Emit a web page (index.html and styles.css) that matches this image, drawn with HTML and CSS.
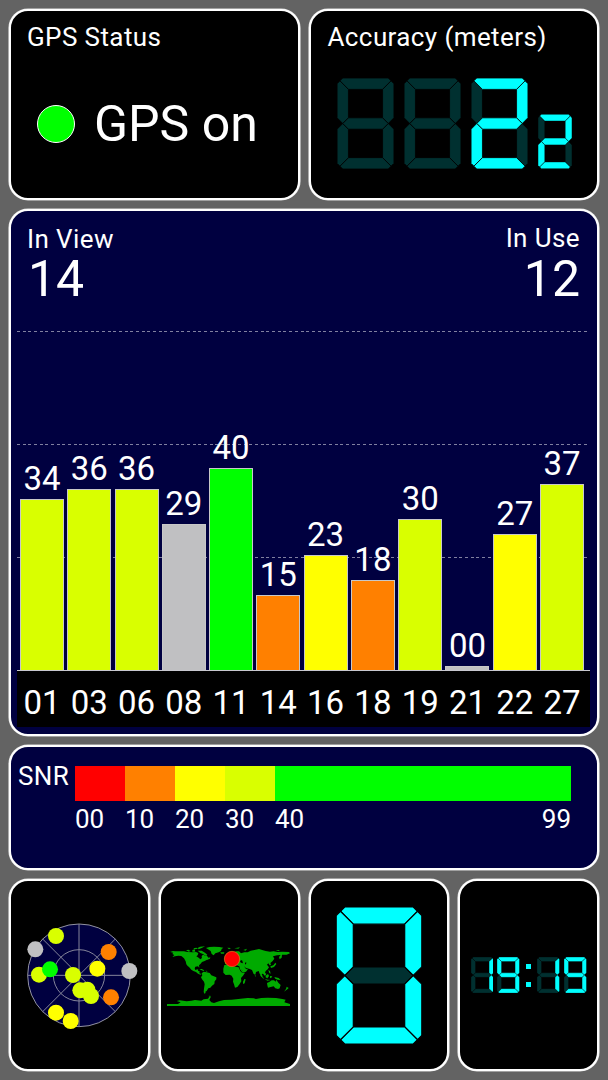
FILE: index.html
```html
<!DOCTYPE html>
<html lang="en">
<head>
<meta charset="utf-8">
<title>GPS Status</title>
<link rel="stylesheet" href="styles.css">
</head>
<body>
<svg class="defs" aria-hidden="true">
  <defs>
    <path id="a" d="M5 5L10 0H90L95 5L80 20H20Z"/>
    <path id="b" d="M95 5L100 10V70L90 80L80 70V20Z"/>
    <path id="c" d="M90 80L100 90V150L95 155L80 140V90Z"/>
    <path id="d" d="M5 155L10 160H90L95 155L80 140H20Z"/>
    <path id="e" d="M10 80L20 90V140L5 155L0 150V90Z"/>
    <path id="f" d="M5 5L20 20V70L10 80L0 70V10Z"/>
    <path id="g" d="M10 80L20 70H80L90 80L80 90H20Z"/>
    <symbol id="off" viewBox="0 0 100 160"><g class="dim"><use href="#a"/><use href="#b"/><use href="#c"/><use href="#d"/><use href="#e"/><use href="#f"/><use href="#g"/></g></symbol>
    <symbol id="n0" viewBox="0 0 100 160"><g class="dim"><use href="#g"/></g><g class="lit"><use href="#a"/><use href="#b"/><use href="#c"/><use href="#d"/><use href="#e"/><use href="#f"/></g></symbol>
    <symbol id="n1" viewBox="0 0 100 160"><g class="dim"><use href="#a"/><use href="#d"/><use href="#e"/><use href="#f"/><use href="#g"/></g><g class="lit"><use href="#b"/><use href="#c"/></g></symbol>
    <symbol id="n2" viewBox="0 0 100 160"><g class="dim"><use href="#c"/><use href="#f"/></g><g class="lit"><use href="#a"/><use href="#b"/><use href="#g"/><use href="#e"/><use href="#d"/></g></symbol>
    <symbol id="n9" viewBox="0 0 100 160"><g class="dim"><use href="#e"/></g><g class="lit"><use href="#a"/><use href="#b"/><use href="#c"/><use href="#d"/><use href="#f"/><use href="#g"/></g></symbol>
  </defs>
</svg>
<main class="dashboard">
  <section class="card status">
    <h2 class="label">GPS Status</h2>
    <div class="status-row"><span class="lamp"></span><span class="big">GPS on</span></div>
  </section>

  <section class="card accuracy">
    <h2 class="label">Accuracy (meters)</h2>
    <div class="digits">
      <svg class="digit"><use href="#off"/></svg>
      <svg class="digit"><use href="#off"/></svg>
      <svg class="digit"><use href="#n2"/></svg>
      <svg class="digit small"><use href="#n2"/></svg>
    </div>
  </section>

  <section class="card signal">
    <header class="counts">
      <div class="count"><h2 class="label">In View</h2><div class="big">14</div></div>
      <div class="count in-use"><h2 class="label">In Use</h2><div class="big">12</div></div>
    </header>
    <div class="plot">
      <div class="gridline g1"></div><div class="gridline g2"></div><div class="gridline g3"></div>
      <div class="column"><span>34</span><i class="bar lime" style="height:171px"></i></div>
      <div class="column"><span>36</span><i class="bar lime" style="height:181px"></i></div>
      <div class="column"><span>36</span><i class="bar lime" style="height:181px"></i></div>
      <div class="column"><span>29</span><i class="bar gray" style="height:146px"></i></div>
      <div class="column"><span>40</span><i class="bar green" style="height:202px"></i></div>
      <div class="column"><span>15</span><i class="bar orange" style="height:75px"></i></div>
      <div class="column"><span>23</span><i class="bar yellow" style="height:115px"></i></div>
      <div class="column"><span>18</span><i class="bar orange" style="height:90px"></i></div>
      <div class="column"><span>30</span><i class="bar lime" style="height:151px"></i></div>
      <div class="column"><span>00</span><i class="bar gray" style="height:4px"></i></div>
      <div class="column"><span>27</span><i class="bar yellow" style="height:136px"></i></div>
      <div class="column"><span>37</span><i class="bar lime" style="height:186px"></i></div>
    </div>
    <div class="axis">
      <span>01</span><span>03</span><span>06</span><span>08</span><span>11</span><span>14</span><span>16</span><span>18</span><span>19</span><span>21</span><span>22</span><span>27</span>
    </div>
  </section>

  <section class="card snr">
    <h2 class="label">SNR</h2>
    <div class="scale">
      <div class="step"><i class="swatch red"></i><span>00</span></div>
      <div class="step"><i class="swatch orange"></i><span>10</span></div>
      <div class="step"><i class="swatch yellow"></i><span>20</span></div>
      <div class="step"><i class="swatch lime"></i><span>30</span></div>
      <div class="step last"><i class="swatch green"></i><span>40</span><span>99</span></div>
    </div>
  </section>

  <section class="card tile">
    <svg class="radar" viewBox="0 0 465 615">
      <circle class="sky" cx="237" cy="301" r="154"/>
      <g class="rings"><circle cx="237" cy="301" r="77"/><path d="M83 301H391M237 147V455M128 192L346 410M346 192L128 410"/></g>
      <g fill="#d9ff00"><circle cx="168" cy="183" r="24"/><circle cx="117" cy="299" r="24"/><circle cx="219" cy="300" r="24"/><circle cx="241" cy="346" r="24"/><circle cx="262" cy="344" r="24"/><circle cx="273" cy="363" r="24"/></g>
      <g fill="#ff0"><circle cx="292" cy="281" r="24"/><circle cx="168" cy="413" r="24"/><circle cx="212" cy="438" r="24"/></g>
      <g fill="#ff8000"><circle cx="326" cy="231" r="24"/><circle cx="333" cy="367" r="24"/></g>
      <g fill="#c0c0c2"><circle cx="106" cy="223" r="24"/><circle cx="388" cy="288" r="24"/></g>
      <circle cx="150" cy="283" r="24" fill="#0f0"/>
    </svg>
  </section>

  <section class="card tile">
    <svg class="map" viewBox="0 0 390 204">
      <g class="land">
        <path d="M9 28L18 30L27 27L33 28L48 28L60 28L70 30L86 31L96 30L103 33L101 40L97 43L104 47L109 52L114 48L112 42L117 38L124 41L128 40L134 49L129 53L122 57L114 60L110 65L105 70L106 77L102 73L94 74L92 79L94 84L100 82L103 83L102 87L107 88L106 94L113 96L109 98L102 95L96 90L88 87L82 83L75 75L71 72L67 67L65 58L60 49L52 42L43 41L33 43L25 45L31 39L25 36L28 32Z"/>
        <path d="M66 25L73 23L80 27L74 29ZM85 24L92 22L94 29L85 29ZM88 19L97 17L102 20L92 22ZM101 18L108 14L123 13L113 18L104 22ZM101 26L113 26L123 32L130 38L124 41L117 36L109 33ZM122 50L139 46L138 50L130 53ZM106 81L113 81L121 85L118 87L110 83ZM124 86L131 87L128 89Z"/>
        <path d="M126 18L136 15L150 14L166 15L178 17L173 21L171 27L164 31L154 34L149 40L143 36L140 27L132 22ZM169 31L181 31L180 35L171 35ZM190 17L201 18L195 22ZM211 19L228 16L223 20ZM238 24L249 20L245 26Z"/>
        <path d="M113 94L119 89L128 91L137 93L142 100L157 106L157 112L152 118L151 126L144 131L139 137L133 139L128 147L124 149L125 153L121 155L119 150L120 140L122 127L120 119L114 112L111 106L115 100Z"/>
        <path d="M181 69L196 69L202 73L213 74L224 76L229 87L235 93L243 92L237 101L231 108L232 118L227 126L220 135L213 137L210 127L207 119L208 110L203 101L197 98L185 99L178 92L178 80ZM241 111L245 112L242 124L237 126L237 119Z"/>
        <path d="M183 61L183 51L190 47L202 43L211 39L207 34L216 28L225 28L231 34L241 31L251 31L260 26L275 23L285 21L297 25L305 27L318 29L329 28L340 30L356 29L375 30L378 34L368 38L354 38L353 47L347 52L345 45L350 39L339 40L327 43L331 50L326 57L319 63L321 69L317 70L313 64L309 68L315 76L311 82L305 87L303 92L307 96L303 102L297 95L293 96L296 103L293 104L287 95L284 87L276 90L274 98L269 96L264 84L257 81L246 78L240 73L246 81L252 82L246 89L236 92L228 82L226 73L218 70L219 63L212 63L208 68L203 62L196 61L190 67L183 67Z"/>
        <path d="M319 73L328 70L334 62L337 66L330 75L321 78ZM290 98L296 104L301 111L297 109L289 101ZM302 111L311 113L320 114L310 116ZM305 101L312 96L315 102L310 109L305 106ZM318 102L325 103L321 109L318 107ZM313 84L318 87L320 95L316 93ZM331 105L344 108L350 114L341 113L334 110ZM309 123L317 119L323 115L330 115L335 119L337 113L343 122L350 129L347 139L342 141L334 139L329 133L320 135L312 137L310 130ZM368 134L374 138L370 142L360 149L366 141ZM272 98L276 102L274 104ZM335 24L348 24L343 27Z"/>
        <path d="M9 186L42 186L50 181L38 177L47 175L68 178L82 176L93 174L112 176L119 172L132 170L137 163L132 162L139 161L140 166L136 174L142 181L150 183L165 178L180 174L203 173L230 170L251 168L269 169L276 171L292 168L311 167L336 168L355 171L365 173L361 181L378 186L378 192H9Z"/>
      </g>
      <g class="water"><path d="M211 60L224 62L220 65L212 64ZM231 62L237 64L235 56L231 54L228 59ZM110 36L115 41L107 48L102 43ZM230 78L238 90L235 86ZM243 62L247 61L246 68L243 65Z"/></g>
      <circle class="here" cx="204" cy="51" r="23"/>
    </svg>
  </section>

  <section class="card tile"><svg class="huge-digit"><use href="#n0"/></svg></section>

  <section class="card tile">
    <div class="clock">
      <svg class="digit"><use href="#n1"/></svg><svg class="digit"><use href="#n9"/></svg>
      <div class="colon"><i></i><i></i></div>
      <svg class="digit"><use href="#n1"/></svg><svg class="digit"><use href="#n9"/></svg>
    </div>
  </section>
</main>
</body>
</html>
```

FILE: styles.css
```css
* { box-sizing: border-box; }

body {
  margin: 0;
  background: #636363;
  color: #fff;
  font-family: Roboto, "Liberation Sans", sans-serif;
}

.defs { display: block; width: 0; height: 0; }

.dashboard {
  display: grid;
  grid-template-columns: repeat(4, 1fr);
  grid-template-rows: 191px 527px 125px 192px;
  gap: 9px;
  width: 608px;
  height: 1080px;
  padding: 9px;
}

.card {
  min-width: 0;
  overflow: hidden;
  background: #000;
  border: 2px solid #fff;
  border-radius: 19px;
  box-shadow: 0 0 0 0.6px rgba(255, 255, 255, 0.8);
}

.label {
  margin: 0;
  font-size: 26px;
  font-weight: 400;
  line-height: 30px;
  letter-spacing: 0.4px;
}

.big { font-size: 50px; line-height: 50px; }

/* Status and accuracy */
.status, .accuracy { grid-column: span 2; padding: 11px 17px 0; }
.status { padding-left: 16px; }
.status-row { display: flex; align-items: center; gap: 19px; margin: 46px 0 0 10px; }
.lamp { width: 38px; height: 38px; border: 1px solid #fff; border-radius: 50%; background: #0f0; }
.status .big { padding-top: 1px; }

.digits { display: flex; align-items: flex-end; gap: 10px; margin: 26px 0 0 9px; }
.digit { display: block; width: 57px; height: 91px; }
.digit.small { width: 34px; height: 55px; }

.dim { fill: #003030; }
.lit { fill: #0ff; }
.dim, .lit { stroke: #000; stroke-width: 1.4px; }

/* Signal chart */
.signal {
  grid-column: span 4;
  display: flex;
  flex-direction: column;
  padding: 13px 7px 7px 6px;
  background: #000040;
}
.counts { display: flex; justify-content: space-between; height: 80px; padding: 0 10px; }
.count .big { padding-left: 1px; }
.in-use { text-align: right; }
.in-use .label { margin: -1px 0 1px; }

.plot, .axis {
  display: grid;
  grid-template-columns: repeat(12, 1fr);
  column-gap: 3.3px;
  padding: 0 6px 0 3px;
  font-size: 33px;
  line-height: 34px;
  text-align: center;
}
.plot { position: relative; flex: 1; border-bottom: 1px solid #c8c8d0; }
.column {
  position: relative;
  display: flex;
  flex-direction: column;
  justify-content: flex-end;
  gap: 3px;
}
.bar { display: block; border: 1px solid #c8c8c8; border-bottom: 0; }
.gridline {
  position: absolute;
  left: 0;
  right: 0;
  height: 1px;
  background: repeating-linear-gradient(90deg, #8080a0 0 3px, transparent 3px 5.67px);
}
.g1 { bottom: 338px; }
.g2 { bottom: 225px; }
.g3 { bottom: 112px; }
.axis { height: 56px; padding-top: 15px; background: #000; }

.red { background: #f00; }
.orange { background: #ff8000; }
.yellow { background: #ff0; }
.lime { background: #d9ff00; }
.green { background: #0f0; }
.gray { background: #c0c0c2; }

/* SNR legend */
.snr { grid-column: span 4; display: flex; padding: 14px 0 0 7px; background: #000040; }
.snr .label { width: 57px; }
.scale {
  display: grid;
  grid-template-columns: repeat(4, 50px) 296px;
  margin-top: 5px;
  font-size: 26px;
  line-height: 30px;
}
.step { display: flex; flex-wrap: wrap; justify-content: space-between; align-content: flex-start; }
.swatch { width: 100%; height: 35px; margin-bottom: 3px; }

/* Bottom tiles */
.tile { display: flex; align-items: center; justify-content: center; }
.radar { flex: none; width: 155px; height: 205px; margin: 4px 3px 0 0; }
.sky { fill: #000040; stroke: #b0b0b8; stroke-width: 2.5px; }
.rings { fill: none; stroke: #85859a; stroke-width: 3px; }
.map { flex: none; width: 130px; height: 68px; margin-top: 1px; }
.land { fill: #00aa00; }
.water { fill: #000; }
.here { fill: #f00; stroke: #e08020; stroke-width: 2px; }
.huge-digit { width: 86px; height: 137px; }
.clock { display: flex; align-items: center; gap: 4px; }
.clock .digit { width: 22.6px; height: 36.2px; }
.colon { display: flex; flex-direction: column; justify-content: space-between; width: 5px; height: 23px; margin: 0 2.2px; }
.colon i { width: 5px; height: 5px; background: #0ff; }
```
